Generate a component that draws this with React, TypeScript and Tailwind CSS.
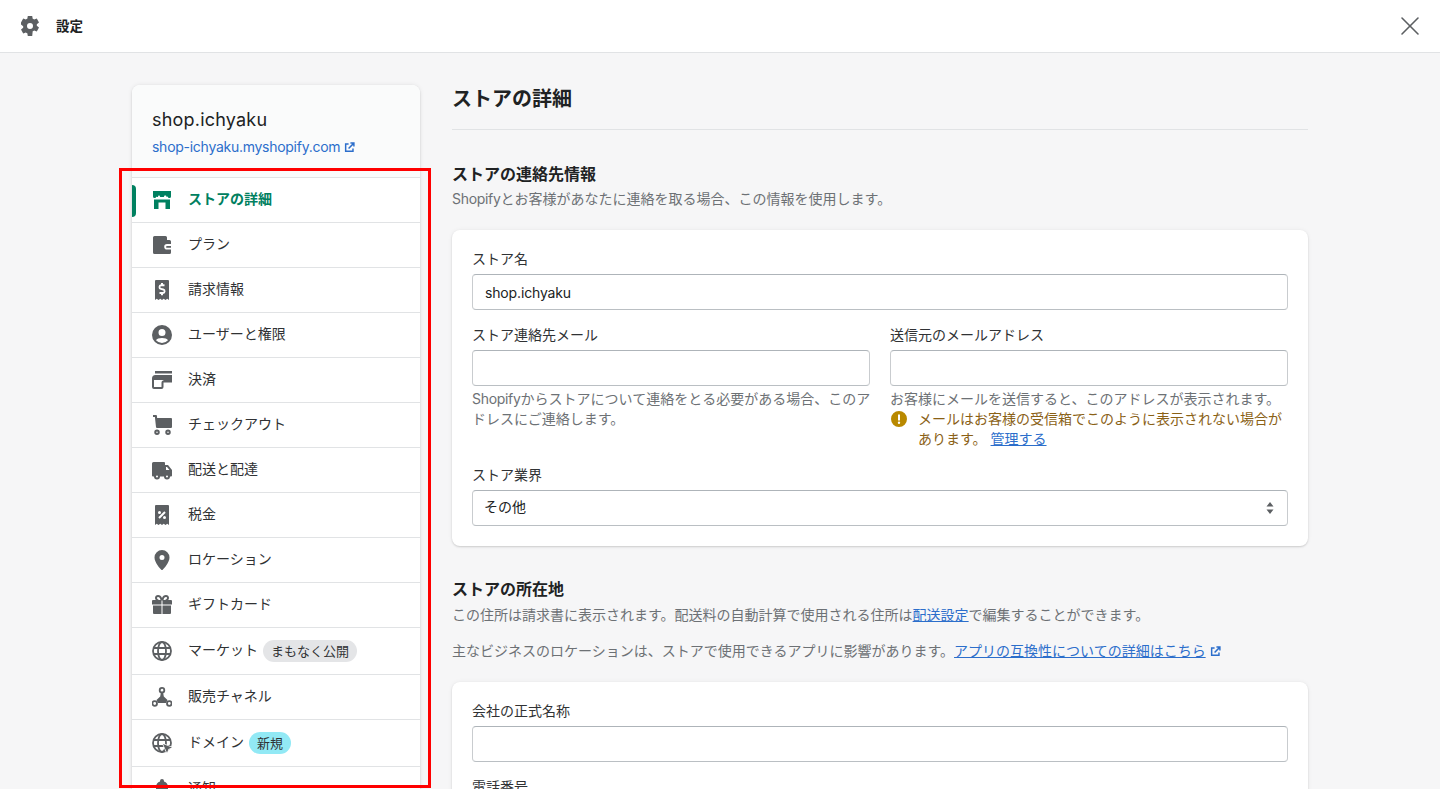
import React from "react";
import { X } from "lucide-react";

function ExternalIcon({ className }: { className?: string }) {
  return (
    <svg viewBox="0 0 12 12" className={className} fill="none" stroke="currentColor" strokeWidth="1.6">
      <path d="M5 2.200H1.800v8h8V7" />
      <path d="M5 7l5.500-5.500M7 1.200h3.800V5" />
    </svg>
  );
}

const gray = "#5c5f62";

function Globe() {
  return (
    <g fill="none" stroke={gray} strokeWidth="1.800">
      <circle cx="10" cy="10" r="9" />
      <ellipse cx="10" cy="10" rx="4" ry="9" />
      <path d="M1.500 7h17M1.500 13h17" />
    </g>
  );
}

const icons: Record<string, React.ReactNode> = {
  store: (
    <>
      <path d="M1 1h18v5.500a1.600 1.600 0 0 1-3.200 0 1.600 1.600 0 0 1-1.100.5l-.7-1.500h-1.500l-.7 1.500h-3.600l-.7-1.500H6.500L5.800 7a1.600 1.600 0 0 1-1.600-.5A1.600 1.600 0 0 1 1 6.500V1z" />
      <path d="M2 9.500h16V19h-4.500v-6.500h-7V19H2V9.500z" />
    </>
  ),
  wallet: (
    <path
      fillRule="evenodd"
      d="M2.500 1h11A1.500 1.500 0 0 1 15 2.500V5h2.500A1.500 1.500 0 0 1 19 6.500V9h-4a2.800 2.800 0 0 0 0 5.600h4v2.900a1.500 1.500 0 0 1-1.500 1.500h-15A1.500 1.500 0 0 1 1 17.500v-15A1.500 1.500 0 0 1 2.500 1zM15 11h4v1.800h-4a.9.900 0 0 1 0-1.800z"
    />
  ),
  billing: (
    <path
      fillRule="evenodd"
      d="M4 0h12a1 1 0 0 1 1 1v19l-1.700-1.300-1.800 1.300-1.800-1.300-1.700 1.300-1.700-1.300L6.500 20l-1.800-1.300L3 20V1a1 1 0 0 1 1-1zm5 3v1.300A2.800 2.800 0 0 0 8.700 9.800l2.400.6a.8.800 0 0 1-.2 1.600H7.500v2H9v1.300h2v-1.300a2.800 2.800 0 0 0 .4-5.500L9 7.900a.8.800 0 0 1 .2-1.600h3.300v-2H11V3H9z"
    />
  ),
  user: (
    <path
      fillRule="evenodd"
      d="M10 0a10 10 0 1 0 0 20 10 10 0 0 0 0-20zm0 4a3.500 3.500 0 1 1 0 7 3.500 3.500 0 0 1 0-7zm0 14a8 8 0 0 1-6-2.700C4.800 13.700 7 13 10 13s5.200.7 6 2.300A8 8 0 0 1 10 18z"
    />
  ),
  payments: (
    <>
      <path d="M3 1h17v2.500H3z" />
      <path
        fillRule="evenodd"
        d="M3.500 5H20v7.500h-8.500V17a2 2 0 0 1-2 2H2a2 2 0 0 1-2-2V8.500A3.500 3.500 0 0 1 3.500 5zM2 10v7h7.500v-4.500a2 2 0 0 1 1-1.700L12 10H2z"
      />
    </>
  ),
  cart: (
    <>
      <path d="M1 0h3a1 1 0 0 1 1 .9L5.100 3H19a1 1 0 0 1 1 1.100v8a1 1 0 0 1-1 .9H5a1 1 0 0 1-1-.9L2.900 2H1V0z" />
      <path
        fillRule="evenodd"
        d="M5 14.500a2.750 2.750 0 1 0 0 5.500 2.750 2.750 0 0 0 0-5.500zm0 2a.75.750 0 1 1 0 1.500.75.750 0 0 1 0-1.500zM16 14.500a2.750 2.750 0 1 0 0 5.500 2.750 2.750 0 0 0 0-5.500zm0 2a.75.750 0 1 1 0 1.500.75.750 0 0 1 0-1.500z"
      />
    </>
  ),
  truck: (
    <path
      fillRule="evenodd"
      d="M1.500 2H12a1 1 0 0 1 1 1v2h3l4 5v5.500a1 1 0 0 1-1 1h-1a3 3 0 0 1-6 0H8a3 3 0 0 1-6 0h-1a1 1 0 0 1-1-1V3.500A1.500 1.500 0 0 1 1.500 2zM14 7v3h3.500L15 7h-1zM5 15.500a1 1 0 1 0 0 2 1 1 0 0 0 0-2zm10 0a1 1 0 1 0 0 2 1 1 0 0 0 0-2z"
    />
  ),
  tax: (
    <path
      fillRule="evenodd"
      d="M4 0h12a1 1 0 0 1 1 1v19l-1.700-1.300-1.800 1.300-1.800-1.300-1.700 1.300-1.700-1.300L6.500 20l-1.800-1.300L3 20V1a1 1 0 0 1 1-1zm8.300 6.300l-6 6 1.400 1.400 6-6-1.400-1.400zM7.500 6a1.500 1.500 0 1 0 0 3 1.500 1.500 0 0 0 0-3zm5 5a1.500 1.500 0 1 0 0 3 1.500 1.500 0 0 0 0-3z"
    />
  ),
  pin: (
    <path
      fillRule="evenodd"
      d="M10 0a7.500 7.500 0 0 0-7.500 7.500C2.500 12.500 8 18.500 9.300 19.700a1 1 0 0 0 1.400 0C12 18.500 17.500 12.500 17.500 7.500A7.500 7.500 0 0 0 10 0zm0 5a2.500 2.500 0 1 1 0 5 2.500 2.500 0 0 1 0-5z"
    />
  ),
  gift: (
    <path
      fillRule="evenodd"
      d="M6 0c2 0 3.300 1.300 4 3 .7-1.700 2-3 4-3 1.700 0 3 1.200 3 2.800 0 .8-.3 1.600-.8 2.200H19a1 1 0 0 1 1 1v3.500H10.500V5.500h-1V9.500H0V6a1 1 0 0 1 1-1h2.800A3.200 3.200 0 0 1 3 2.800C3 1.200 4.300 0 6 0zm0 2c-.6 0-1 .4-1 .9C5 4 6.500 5 8.500 5 8.200 3.300 7.300 2 6 2zm8 0c-1.300 0-2.200 1.300-2.500 3 2 0 3.500-1 3.500-2.100 0-.5-.4-.9-1-.9zM1 10.500h8.500V19H2a1 1 0 0 1-1-1v-7.500zm9.500 0H19V18a1 1 0 0 1-1 1h-7.500v-8.500z"
    />
  ),
  globe: <Globe />,
  channels: (
    <>
      <path d="M9 5h2l.8 4.500 3.700 3.500-1.500 3H6l-1.500-3 3.700-3.500L9 5z" />
      <g fill="white" stroke={gray} strokeWidth="1.800">
        <circle cx="10" cy="3.200" r="2.300" />
        <circle cx="2.700" cy="16.500" r="2.300" />
        <circle cx="17.300" cy="16.500" r="2.300" />
      </g>
    </>
  ),
  domain: (
    <>
      <Globe />
      <path d="M11 11l9 3.500-3.500 1.500-1.500 3.800L11 11z" stroke="white" strokeWidth="1.500" strokeLinejoin="round" paintOrder="stroke" />
    </>
  ),
  bell: <path d="M10 0a2 2 0 0 1 2 2v.6A6 6 0 0 1 16 8v5l2 3v1H2v-1l2-3V8a6 6 0 0 1 4-5.400V2a2 2 0 0 1 2-2zM8 18h4a2 2 0 0 1-4 0z" />,
};

const rows: { icon: string; label: string; badge?: string; badgeClass?: string; h: string }[] = [
  { icon: "store", label: "ストアの詳細", h: "h-[45px]" },
  { icon: "wallet", label: "プラン", h: "h-[45px]" },
  { icon: "billing", label: "請求情報", h: "h-[45px]" },
  { icon: "user", label: "ユーザーと権限", h: "h-[45px]" },
  { icon: "payments", label: "決済", h: "h-[45px]" },
  { icon: "cart", label: "チェックアウト", h: "h-[45px]" },
  { icon: "truck", label: "配送と配達", h: "h-[45px]" },
  { icon: "tax", label: "税金", h: "h-[45px]" },
  { icon: "pin", label: "ロケーション", h: "h-[45px]" },
  { icon: "gift", label: "ギフトカード", h: "h-[45px]" },
  { icon: "globe", label: "マーケット", badge: "まもなく公開", badgeClass: "bg-[#e4e5e7]", h: "h-[47px]" },
  { icon: "channels", label: "販売チャネル", h: "h-[45px]" },
  { icon: "domain", label: "ドメイン", badge: "新規", badgeClass: "bg-[#92e9f5]", h: "h-[47px]" },
  { icon: "bell", label: "通知", h: "h-[45px]" },
];

function Sidebar() {
  return (
    <div className="w-[288px] shrink-0 bg-white rounded-t-lg shadow-[0_0_5px_rgba(23,24,24,0.08),0_1px_2px_rgba(0,0,0,0.15)]">
      <div className="h-[93px] bg-[#fafbfb] rounded-t-lg pt-[21px] pl-5 border-b border-[#e1e3e5]">
        <div className="text-[18px] leading-[28px] tracking-[0.2px] text-[#202223]">shop.ichyaku</div>
        <div className="mt-[3px] flex items-center gap-1 text-[14px] leading-5 tracking-[-0.27px] text-[#2c6ecb]">
          shop-ichyaku.myshopify.com
          <ExternalIcon className="w-[11px] h-[11px]" />
        </div>
      </div>
      {rows.map((r, i) => (
        <div key={r.label} className={`relative flex items-center pl-5 border-b border-[#e1e3e5] ${r.h}`}>
          {i === 0 && <span className="absolute left-0 top-[7px] w-1 h-8 bg-[#008060] rounded-r" />}
          <svg viewBox="0 0 20 20" className={`w-5 h-5 shrink-0 ${i === 0 ? "fill-[#008060]" : "fill-[#5c5f62]"}`}>
            {icons[r.icon]}
          </svg>
          <span className={`ml-4 mb-[2px] text-[14px] leading-5 ${i === 0 ? "font-semibold text-[#008060]" : "text-[#303234]"}`}>{r.label}</span>
          {r.badge && (
            <span className={`ml-[5px] h-[22px] px-2 rounded-full text-[13px] leading-[22px] text-[#303234] ${r.badgeClass}`}>{r.badge}</span>
          )}
        </div>
      ))}
    </div>
  );
}

function Field({ label, value, valueClass }: { label: string; value?: string; valueClass?: string }) {
  return (
    <div>
      <div className="text-[14px] leading-5 text-[#303234] mb-[5px]">{label}</div>
      <div className={`h-9 bg-white rounded border border-[#c9cccf] border-t-[#aeb4b9] border-b-[#babfc3] text-[14px] text-[#202223] ${valueClass ?? "px-3 leading-[34px]"}`}>{value}</div>
    </div>
  );
}

function Card({ children }: { children: React.ReactNode }) {
  return <div className="bg-white rounded-lg px-5 pt-[19px] pb-5 shadow-[0_0_5px_rgba(23,24,24,0.05),0_1px_2px_rgba(0,0,0,0.15)]">{children}</div>;
}

function Main() {
  return (
    <div className="flex-1 min-w-0">
      <div className="h-[45px] border-b border-[#e1e3e5] text-[20px] leading-7 font-semibold text-[#202223]">ストアの詳細</div>

      <div className="mt-[32px] text-[16px] leading-6 font-semibold text-[#202223]">ストアの連絡先情報</div>
      <div className="mt-[3px] text-[14px] leading-5 text-[#6d7175]">
        <span className="tracking-[-0.3px]">Shopify</span>とお客様があなたに連絡を取る場合、この情報を使用します。
      </div>

      <div className="mt-[21px]">
        <Card>
          <Field label="ストア名" value="shop.ichyaku" valueClass="pl-3 leading-[35px] tracking-[-0.15px]" />
          <div className="mt-[15px] grid grid-cols-2 gap-5">
            <div>
              <Field label="ストア連絡先メール" />
              <div className="mt-[3px] text-[14px] leading-5 text-[#6d7175] whitespace-nowrap">
                <span className="tracking-[-0.3px]">Shopify</span>からストアについて連絡をとる必要がある場合、このア
                <br />
                ドレスにご連絡します。
              </div>
            </div>
            <div>
              <Field label="送信元のメールアドレス" />
              <div className="mt-[3px] text-[14px] leading-5 text-[#6d7175]">お客様にメールを送信すると、このアドレスが表示されます。</div>
              <div className="flex gap-[9px] text-[14px] leading-5 text-[#8a6116]">
                <svg viewBox="0 0 20 20" className="w-5 h-5 shrink-0 fill-[#b98900] -ml-[1px]">
                  <path fillRule="evenodd" d="M10 2a8 8 0 1 0 0 16 8 8 0 0 0 0-16zm-1 3.500h2v6H9v-6zM10 12.500a1.200 1.200 0 1 1 0 2.400 1.200 1.200 0 0 1 0-2.400z" />
                </svg>
                <div>
                  メールはお客様の受信箱でこのように表示されない場合があります。 <span className="text-[#2c6ecb] underline">管理する</span>
                </div>
              </div>
            </div>
          </div>
          <div className="mt-4 relative">
            <Field label="ストア業界" value="その他" valueClass="pl-[11px] leading-[32px]" />
            <svg viewBox="0 0 10 14" className="absolute right-[13px] bottom-[11px] w-[10px] h-[14px] fill-[#5c5f62]">
              <path d="M5 1l3.500 4.500h-7zM5 13L1.500 8.500h7z" />
            </svg>
          </div>
        </Card>
      </div>

      <div className="mt-[31px] text-[16px] leading-6 font-semibold text-[#202223]">ストアの所在地</div>
      <div className="mt-1 text-[14px] leading-5 text-[#6d7175]">
        この住所は請求書に表示されます。配送料の自動計算で使用される住所は<span className="text-[#2c6ecb] underline">配送設定</span>で編集することができます。
      </div>
      <div className="mt-4 flex items-center text-[14px] leading-5 text-[#6d7175]">
        主なビジネスのロケーションは、ストアで使用できるアプリに影響があります。<span className="text-[#2c6ecb] underline">アプリの互換性についての詳細はこちら</span>
        <ExternalIcon className="ml-1 w-[11px] h-[11px] text-[#2c6ecb]" />
      </div>

      <div className="mt-[21px]">
        <Card>
          <Field label="会社の正式名称" />
          <div className="mt-[15px]">
            <Field label="電話番号" />
          </div>
        </Card>
      </div>
    </div>
  );
}

export default function App() {
  return (
    <div className="relative h-[789px] overflow-hidden bg-[#f6f6f7] font-['Inter','Noto_Sans_CJK_JP',sans-serif]">
      <div className="h-[53px] bg-white border-b border-[#e1e3e5] flex items-center pl-5 pr-[14px]">
        <svg viewBox="0 0 20 20" className="w-5 h-5 fill-[#5c5f62]">
          <path
            fillRule="evenodd"
            d="M7.800 0h4.400l.5 2.800c.5.200 1 .5 1.400.8l2.700-1 2.200 3.800-2.200 1.800a6 6 0 0 1 0 1.600l2.200 1.800-2.200 3.800-2.700-1c-.4.300-.9.600-1.400.8L12.200 20H7.800l-.5-2.800c-.5-.2-1-.5-1.400-.8l-2.700 1L1 13.600l2.200-1.800a6 6 0 0 1 0-1.600L1 8.400V6.400l2.200-3.800 2.700 1c.4-.3.9-.6 1.400-.8L7.800 0zM10 7a3 3 0 1 0 0 6 3 3 0 0 0 0-6z"
          />
        </svg>
        <span className="ml-4 text-[13.500px] font-semibold text-[#202223]">設定</span>
        <X className="ml-auto text-[#5c5f62]" size={32} strokeWidth={1.200} />
      </div>
      <div className="mx-auto w-[1176px] pt-8 flex gap-8">
        <Sidebar />
        <Main />
      </div>
      <div className="absolute left-[119px] top-[168px] w-[312px] h-[620px] border-[3px] border-[#ff0000]" />
    </div>
  );
}
